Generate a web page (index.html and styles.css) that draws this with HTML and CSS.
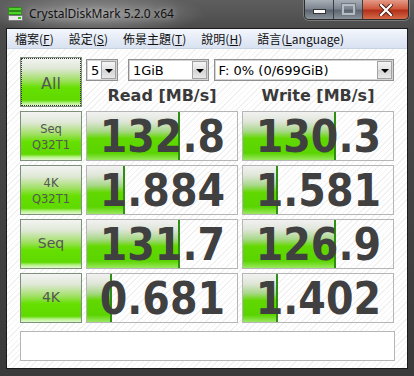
FILE: index.html
```html
<!DOCTYPE html>
<html lang="zh-Hant">
<head>
<meta charset="UTF-8" />
<title>CrystalDiskMark 5.2.0 x64</title>
<link rel="stylesheet" href="styles.css">
</head>
<body>

<div class="window">
  <div class="titlebar">
    <svg class="app-icon" width="15" height="14" viewBox="0 0 15 14">
      <rect x="0.5" y="0.5" width="13" height="3" rx="1" fill="#4fd12a" stroke="#2a8a18"/>
      <rect x="0.5" y="4.5" width="13" height="3" rx="1" fill="#4fd12a" stroke="#2a8a18"/>
      <rect x="0.5" y="8.5" width="14" height="5" rx="1" fill="#e8e8e8" stroke="#7a7a7a"/>
      <rect x="10" y="10" width="3" height="2" fill="#39c21a"/>
    </svg>
    <span class="title">CrystalDiskMark 5.2.0 x64</span>
    <div class="controls">
      <div class="ctl min"><span></span></div>
      <div class="ctl max"><span></span></div>
      <div class="ctl close">
        <svg width="14" height="12" viewBox="0 0 14 12">
          <path d="M2 1 L12 11 M12 1 L2 11" stroke="#4a1a10" stroke-width="4" stroke-linecap="square"/>
          <path d="M2 1 L12 11 M12 1 L2 11" stroke="#ffffff" stroke-width="2.2" stroke-linecap="square"/>
        </svg>
      </div>
    </div>
  </div>

  <div class="client">
    <div class="menubar">
      <span>檔案(<u>F</u>)</span>
      <span>設定(<u>S</u>)</span>
      <span>佈景主題(<u>T</u>)</span>
      <span>說明(<u>H</u>)</span>
      <span>語言(<u>L</u>anguage)</span>
    </div>

    <div class="content">
      <div class="grid">
        <div class="run all focus">All</div>
        <div class="top">
          <div class="selects">
            <div class="combo c-count"><span>5</span><i></i></div>
            <div class="combo c-size"><span>1GiB</span><i></i></div>
            <div class="combo c-drive"><span>F: 0% (0/699GiB)</span><i></i></div>
          </div>
          <div class="heads">
            <div>Read [MB/s]</div>
            <div>Write [MB/s]</div>
          </div>
        </div>

        <div class="run small">Seq<br>Q32T1</div>
        <div class="val"><div class="bar" style="width:93px"></div><span>132.8</span></div>
        <div class="val"><div class="bar" style="width:93px"></div><span>130.3</span></div>

        <div class="run small">4K<br>Q32T1</div>
        <div class="val"><div class="bar" style="width:38px"></div><span>1.884</span></div>
        <div class="val"><div class="bar" style="width:35px"></div><span>1.581</span></div>

        <div class="run mid">Seq</div>
        <div class="val"><div class="bar" style="width:93px"></div><span>131.7</span></div>
        <div class="val"><div class="bar" style="width:93px"></div><span>126.9</span></div>

        <div class="run mid">4K</div>
        <div class="val"><div class="bar" style="width:25px"></div><span>0.681</span></div>
        <div class="val"><div class="bar" style="width:35px"></div><span>1.402</span></div>
      </div>
      <div class="comment"></div>
    </div>
  </div>
</div>

</body>
</html>
```

FILE: styles.css
```css
html, body {
  margin: 0; padding: 0;
  background: #3c3c3c;
}
.window {
  width: 414px;
  height: 376px;
  box-sizing: border-box;
  padding: 0 6px 7px 6px;
  display: flex;
  flex-direction: column;
  background:
    radial-gradient(ellipse 110px 22px at 95px 14px, rgba(200,200,200,0.55), rgba(200,200,200,0) 100%),
    linear-gradient(to bottom, #5e5e5e, #4a4a4a 30px, #3a3a3a);
  font-family: "DejaVu Sans", sans-serif;
}
.titlebar {
  height: 28px;
  display: flex;
  align-items: flex-start;
  flex-shrink: 0;
}
.app-icon {
  margin: 7px 0 0 2px;
}
.title {
  margin: 5px 0 0 6px;
  font-family: "Noto Sans", sans-serif;
  font-size: 12px;
  color: #111;
  text-shadow: 0 0 6px rgba(255,255,255,0.7);
}
.controls {
  margin-left: auto;
  margin-right: -1px;
  display: flex;
  height: 19px;
  border: 1px solid #2c2c2c;
  border-top: none;
  border-radius: 0 0 5px 5px;
  overflow: hidden;
  box-shadow: 0 0 0 1px rgba(200,200,200,0.35);
}
.ctl {
  display: flex;
  align-items: center;
  justify-content: center;
  width: 28px;
  background: linear-gradient(to bottom, #a7aeb6, #7d8690 45%, #5d6670 55%, #8a939c);
  border-right: 1px solid #3a3f45;
}
.min span {
  width: 11px; height: 3px;
  background: #fff;
  border: 1px solid #333;
  margin-top: 4px;
}
.max span {
  width: 9px; height: 7px;
  border: 2px solid #b5bcc4;
  outline: 1px solid #707880;
}
.ctl.close {
  width: 45px;
  border-right: none;
  background: linear-gradient(to bottom, #e49a88, #cf5a3e 45%, #b3301a 55%, #d46a48);
}
.client {
  flex: 1;
  display: flex;
  flex-direction: column;
  border: 1px solid #1a1a1a;
  background: repeating-linear-gradient(135deg, #ffffff 0 3px, #f1f1f1 3px 4px);
}
.menubar {
  height: 19px;
  display: flex;
  align-items: center;
  gap: 15px;
  padding-left: 8px;
  background: linear-gradient(to bottom, #f4f7fc, #e3eaf6 60%, #d9e2f1);
  border-bottom: 1px solid #c8d2e2;
  font-family: "Liberation Sans", "Noto Sans CJK TC", sans-serif;
  font-size: 12px;
  color: #111;
}
.menubar span {
  font-family: "Noto Sans CJK TC", sans-serif;
}
.content {
  flex: 1;
  padding: 8px 12px 0 13px;
}
.grid {
  display: grid;
  grid-template-columns: 62px 152px 152px;
  grid-template-rows: 50px repeat(4, 50px);
  column-gap: 4px;
  row-gap: 4px;
}
.run {
  box-sizing: border-box;
  border: 1px solid #7c907c;
  background: linear-gradient(to bottom, #f4f4f4 0%, #dfe8d6 22%, #a4e06a 45%, #66e000 62%, #5fd900 88%, #b8f28a 94%, #e2f8d0 100%);
  display: flex;
  align-items: center;
  justify-content: center;
  text-align: center;
  color: #555;
}
.run.all {
  font-size: 16px;
  outline: 1px dotted #333;
  outline-offset: -2px;
  padding-top: 2px;
}
.run.small {
  font-size: 11.5px;
  line-height: 16px;
  padding-top: 1px;
}
.run.mid {
  font-size: 14px;
  padding-bottom: 2px;
}
.top {
  grid-column: 2 / 4;
  display: flex;
  flex-direction: column;
}
.selects {
  display: flex;
  margin-top: 2px;
  height: 22px;
}
.combo {
  box-sizing: border-box;
  height: 22px;
  display: flex;
  align-items: center;
  background: #fff;
  border: 1px solid #8f8f8f;
  box-shadow: inset 0 0 0 1px #d4d4d4;
  font-family: "DejaVu Sans", sans-serif;
  font-size: 13px;
  color: #000;
}
.combo span {
  flex: 1;
  padding-left: 4px;
  white-space: nowrap;
}
.combo i {
  box-sizing: border-box;
  width: 15px;
  height: 18px;
  margin-right: 1px;
  border: 1px solid #a2a2a2;
  background: linear-gradient(to bottom, #f5f5f5, #e3e3e3 50%, #d3d3d3 51%, #e8e8e8);
  position: relative;
}
.combo i::after {
  content: "";
  position: absolute;
  left: 3px;
  top: 7px;
  border-left: 4px solid transparent;
  border-right: 4px solid transparent;
  border-top: 4px solid #000;
}
.c-count { width: 32px; }
.c-size { width: 81px; margin-left: 10px; }
.c-drive { width: 181px; margin-left: 5px; }
.heads {
  display: grid;
  grid-template-columns: 152px 152px;
  column-gap: 4px;
  margin-top: 5px;
  font-family: "DejaVu Sans", sans-serif;
  font-weight: 700;
  font-size: 16px;
  line-height: 20px;
  color: #3a3a3a;
  text-align: center;
}
.val {
  box-sizing: border-box;
  position: relative;
  border: 1px solid #b6b6b6;
  display: flex;
  align-items: center;
  justify-content: flex-end;
  padding-right: 12px;
  overflow: hidden;
}
.bar {
  position: absolute;
  left: 0; top: 0; bottom: 0;
  box-sizing: border-box;
  border-right: 2px solid #2e8f12;
  background: linear-gradient(to bottom, #f2f2f2 0%, #dfe6d8 20%, #a9d88a 40%, #62d800 55%, #5ad400 85%, #9ae860 100%);
}
.val span {
  position: relative;
  font-family: "DejaVu Sans Condensed", "DejaVu Sans", sans-serif;
  font-stretch: condensed;
  font-weight: 700;
  font-size: 44px;
  line-height: 1;
  color: #404040;
  padding-top: 1px;
}
.comment {
  box-sizing: border-box;
  height: 30px;
  margin-top: 8px;
  border: 1px solid #b6b6b6;
  background: #fff;
}
```
